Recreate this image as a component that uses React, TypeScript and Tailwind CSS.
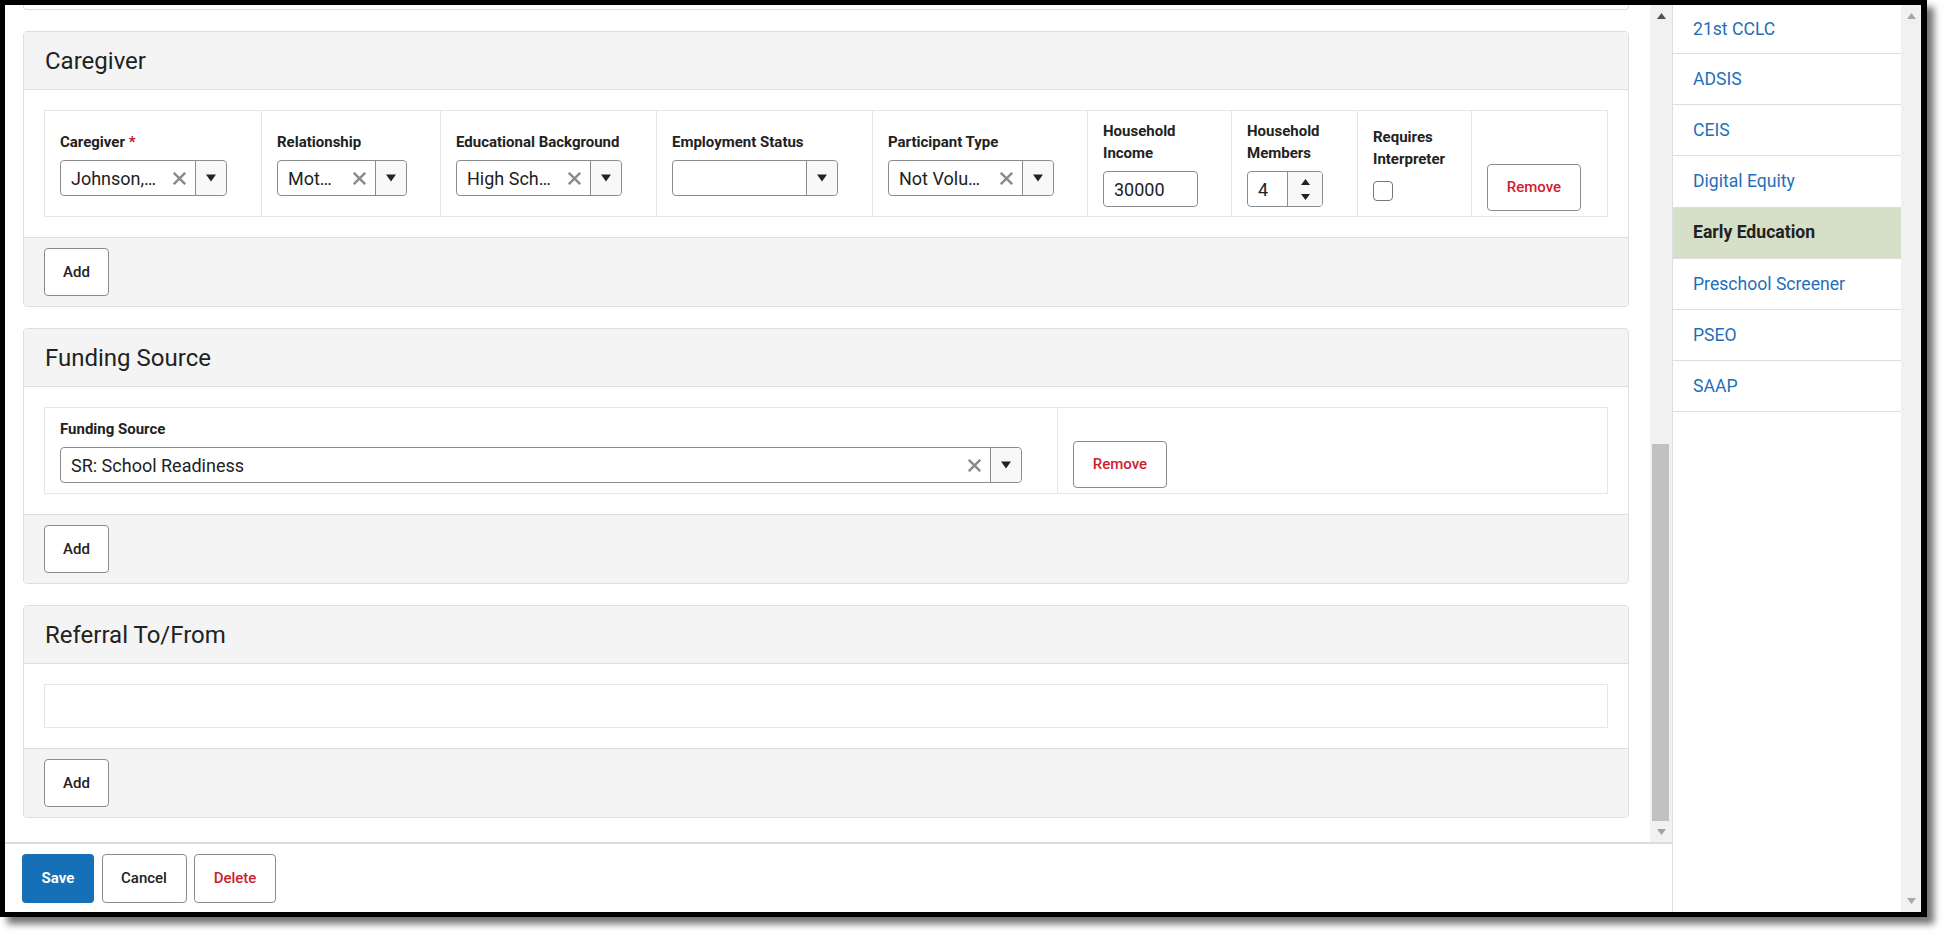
import React from "react";

function XIcon() {
  return (
    <svg width="13" height="13" viewBox="0 0 13 13" className="shrink-0">
      <path d="M0.8 0.8 L12.2 12.2 M12.2 0.8 L0.8 12.2" stroke="#8a8a8a" strokeWidth="2.4" />
    </svg>
  );
}

function Caret() {
  return (
    <svg width="10" height="8" viewBox="0 0 10 8">
      <path d="M0 0.5 H10 L5 7.5 Z" fill="#222" />
    </svg>
  );
}

function SmallTri({ up, color }: { up?: boolean; color: string }) {
  return (
    <svg width="9" height="6" viewBox="0 0 9 6">
      {up ? <path d="M0 6 H9 L4.5 0 Z" fill={color} /> : <path d="M0 0 H9 L4.5 6 Z" fill={color} />}
    </svg>
  );
}

function Select({ className, value, clearable = true }: { className: string; value: string; clearable?: boolean }) {
  return (
    <div className={"flex h-[36px] items-center rounded-[4px] border border-[#8c8c8c] bg-white " + className}>
      <div className="min-w-0 flex-1 overflow-hidden whitespace-nowrap pl-[10px] text-[18px] text-[#222]">{value}</div>
      {clearable && (
        <div className="mr-[9px] flex items-center">
          <XIcon />
        </div>
      )}
      <div className="flex h-full w-[31px] items-center justify-center rounded-r-[4px] border-l border-[#8c8c8c] bg-[#f8f8f8]">
        <Caret />
      </div>
    </div>
  );
}

function Label({ children }: { children: React.ReactNode }) {
  return <div className="mb-[7px] text-[15px] font-bold leading-[22px] text-[#222]">{children}</div>;
}

function AddButton() {
  return (
    <button className="h-[48px] w-[65px] rounded-[4px] border border-[#8c8c8c] bg-white text-[15px] font-medium text-[#222]">
      Add
    </button>
  );
}

function RemoveButton() {
  return (
    <button className="h-[47px] w-[94px] rounded-[4px] border border-[#8c8c8c] bg-white text-[15px] font-medium text-[#d0202e]">
      Remove
    </button>
  );
}

function Card({ title, children }: { title: string; children: React.ReactNode }) {
  return (
    <div className="shrink-0 overflow-hidden rounded-[4px] border border-[#dedede] bg-white">
      <div className="flex h-[58px] items-center border-b border-[#dedede] bg-[#f4f4f4] pl-[21px] text-[24px] text-[#222]">
        {title}
      </div>
      <div className="p-[20px]">{children}</div>
      <div className="border-t border-[#dedede] bg-[#f4f4f4] px-[20px] py-[10px]">
        <AddButton />
      </div>
    </div>
  );
}

const sideItems = [
  "21st CCLC",
  "ADSIS",
  "CEIS",
  "Digital Equity",
  "Early Education",
  "Preschool Screener",
  "PSEO",
  "SAAP",
];

export default function App() {
  return (
    <div className="h-[942px] w-[1951px] overflow-hidden bg-white font-['Roboto',sans-serif]">
      <div className="flex h-[917px] w-[1927px] border-[5px] border-r-[6px] border-black shadow-[7px_7px_7px_rgba(0,0,0,0.55)]">
        {/* main column */}
        <div className="flex w-[1667px] flex-col bg-white">
          <div className="flex h-[837px] overflow-hidden">
            <div className="flex flex-1 flex-col gap-[21px] pl-[18px] pr-[21px]">
              <div className="h-[5px] shrink-0 rounded-b-[4px] border border-t-0 border-[#dedede] bg-white" />

              <Card title="Caregiver">
                <div className="flex h-[107px] border border-[#e6e6e6]">
                  <div className="flex w-[216px] flex-col justify-center pl-[15px]">
                    <Label>
                      Caregiver <span className="text-[#c8102e]">*</span>
                    </Label>
                    <Select className="w-[167px]" value="Johnson,…" />
                  </div>
                  <div className="flex w-[179px] flex-col justify-center border-l border-[#e6e6e6] pl-[15px]">
                    <Label>Relationship</Label>
                    <Select className="w-[130px]" value="Mot…" />
                  </div>
                  <div className="flex w-[216px] flex-col justify-center border-l border-[#e6e6e6] pl-[15px]">
                    <Label>Educational Background</Label>
                    <Select className="w-[166px]" value="High Sch…" />
                  </div>
                  <div className="flex w-[216px] flex-col justify-center border-l border-[#e6e6e6] pl-[15px]">
                    <Label>Employment Status</Label>
                    <Select className="w-[166px]" value="" clearable={false} />
                  </div>
                  <div className="flex w-[215px] flex-col justify-center border-l border-[#e6e6e6] pl-[15px]">
                    <Label>Participant Type</Label>
                    <Select className="w-[166px]" value="Not Volu…" />
                  </div>
                  <div className="flex w-[144px] flex-col justify-center border-l border-[#e6e6e6] pl-[15px]">
                    <Label>
                      Household
                      <br />
                      Income
                    </Label>
                    <div className="flex h-[36px] w-[95px] items-center rounded-[4px] border border-[#8c8c8c] pl-[10px] text-[18px] text-[#222]">
                      30000
                    </div>
                  </div>
                  <div className="flex w-[126px] flex-col justify-center border-l border-[#e6e6e6] pl-[15px]">
                    <Label>
                      Household
                      <br />
                      Members
                    </Label>
                    <div className="flex h-[36px] w-[76px] overflow-hidden rounded-[4px] border border-[#8c8c8c]">
                      <div className="flex flex-1 items-center pl-[10px] text-[18px] text-[#222]">4</div>
                      <div className="flex w-[35px] flex-col items-center justify-center gap-[9px] border-l border-[#8c8c8c] bg-[#f8f8f8]">
                        <SmallTri up color="#222" />
                        <SmallTri color="#222" />
                      </div>
                    </div>
                  </div>
                  <div className="flex w-[114px] flex-col justify-center border-l border-[#e6e6e6] pl-[15px]">
                    <Label>
                      Requires
                      <br />
                      Interpreter
                    </Label>
                    <div className="mt-[4px] h-[20px] w-[20px] rounded-[4px] border-[1.5px] border-[#777] bg-white" />
                  </div>
                  <div className="flex flex-1 flex-col justify-end border-l border-[#e6e6e6] pb-[5px] pl-[15px]">
                    <RemoveButton />
                  </div>
                </div>
              </Card>

              <Card title="Funding Source">
                <div className="flex h-[87px] border border-[#e6e6e6]">
                  <div className="flex w-[1012px] flex-col justify-center pl-[15px]">
                    <Label>Funding Source</Label>
                    <Select className="w-[962px]" value="SR: School Readiness" />
                  </div>
                  <div className="flex flex-1 flex-col justify-end border-l border-[#e6e6e6] pb-[5px] pl-[15px]">
                    <RemoveButton />
                  </div>
                </div>
              </Card>

              <Card title="Referral To/From">
                <div className="h-[44px] border border-[#e6e6e6]" />
              </Card>
            </div>

            {/* main scrollbar */}
            <div className="flex w-[22px] flex-col bg-[#f1f1f1]">
              <div className="flex h-[22px] items-center justify-center">
                <SmallTri up color="#505050" />
              </div>
              <div className="flex flex-1 flex-col justify-end">
                <div className="ml-[2px] h-[377px] w-[17px] bg-[#c1c1c1]" />
              </div>
              <div className="flex h-[21px] items-center justify-center">
                <SmallTri color="#a3a3a3" />
              </div>
            </div>
          </div>

          {/* footer */}
          <div className="flex h-[70px] gap-[7.5px] border-t-2 border-[#dcdcdc] bg-white pl-[17px] pt-[10px]">
            <button className="h-[49px] w-[72px] rounded-[4px] bg-[#1570b8] text-[15px] font-bold text-white">Save</button>
            <button className="h-[49px] w-[85px] rounded-[4px] border border-[#8c8c8c] bg-white text-[15px] font-medium text-[#222]">
              Cancel
            </button>
            <button className="h-[49px] w-[82px] rounded-[4px] border border-[#8c8c8c] bg-white text-[15px] font-medium text-[#d0202e]">
              Delete
            </button>
          </div>
        </div>

        {/* sidebar */}
        <div className="flex flex-1 border-l border-[#dedede] bg-white">
          <div className="flex flex-1 flex-col">
            {sideItems.map((item, i) => (
              <div
                key={item}
                className={
                  (i === 0 ? "h-[49px] " : "h-[51.2px] ") +
                  "flex shrink-0 items-center border-b border-[#dedede] pl-[20px] text-[17.6px] " +
                  (item === "Early Education" ? "bg-[#d6dfc7] font-bold text-[#222]" : "text-[#1f6fba]")
                }
              >
                {item}
              </div>
            ))}
          </div>
          <div className="flex w-[20px] flex-col bg-[#f1f1f1]">
            <div className="flex h-[22px] items-center justify-center">
              <SmallTri up color="#a8a8a8" />
            </div>
            <div className="flex-1" />
            <div className="flex h-[22px] items-center justify-center">
              <SmallTri color="#a8a8a8" />
            </div>
          </div>
        </div>
      </div>
    </div>
  );
}
